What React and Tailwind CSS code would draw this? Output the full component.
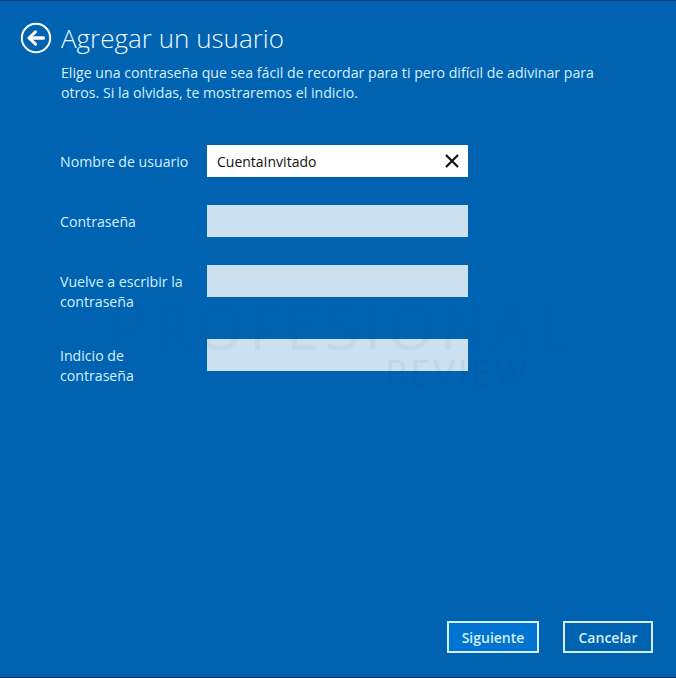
import React from 'react';

function Field({ label, top, children, white }) {
    return (
        <div className={`flex h-8 items-start ${top || ''}`}>
            <div className="w-[147px] shrink-0 pt-[7px] text-[14.15px] leading-[20px] text-[#d4f0ff]">{label}</div>
            <div className={`flex h-8 w-[261px] items-center justify-between ${white ? 'bg-white' : 'bg-[#cce0f0]'}`}>
                {children}
            </div>
        </div>
    );
}

export default function App() {
    return (
        <div className="relative flex h-[678px] w-[676px] flex-col overflow-hidden border-t border-b border-t-[#0a3a70] border-b-[#0a2a50] bg-[#0063b1] font-['Open_Sans','Noto_Sans',sans-serif] text-white">
            {/* Header */}
            <div className="flex items-center pl-[20px] pt-[21px]">
                <svg width="32" height="32" viewBox="0 0 32 32" fill="none">
                    <circle cx="16" cy="16" r="14.2" stroke="white" strokeWidth="2" />
                    <path d="M9 16 L15.5 9.8 M9 16 L15.5 22.2" stroke="white" strokeWidth="3" strokeLinecap="round" />
                    <path d="M10 16 H23.5" stroke="white" strokeWidth="3.4" strokeLinecap="round" />
                </svg>
                <h1 className="ml-[9px] text-[26px] font-light leading-[32px] text-[#eef8ff]">Agregar un usuario</h1>
            </div>
            <p className="ml-[61px] mt-[9px] w-[570px] text-[14.15px] leading-[20px] text-[#d4f0ff]">
                Elige una contraseña que sea fácil de recordar para ti pero difícil de adivinar para otros. Si la olvidas, te mostraremos el indicio.
            </p>

            {/* Form */}
            <div className="ml-[60px] mt-[42px] flex flex-col">
                <Field label="Nombre de usuario" white>
                    <span className="pl-[10px] text-[14px] text-[#111]">CuentaInvitado</span>
                    <svg className="mr-[9px]" width="14" height="14" viewBox="0 0 14 14" stroke="#111" strokeWidth="2.2">
                        <path d="M1 1 L13 13 M13 1 L1 13" />
                    </svg>
                </Field>
                <Field label="Contraseña" top="mt-7" />
                <Field label={<>Vuelve a escribir la<br />contraseña</>} top="mt-7" />
                <Field label={<>Indicio de<br />contraseña</>} top="mt-[42px]" />
            </div>

            {/* Watermark */}
            <div className="pointer-events-none absolute left-[110px] top-[290px] text-[62px] leading-[70px] tracking-[5px] text-[#003a70] opacity-[0.04]">PROFESIONAL</div>
            <div className="pointer-events-none absolute left-[385px] top-[352px] text-[36px] leading-[40px] tracking-[3px] text-[#003a70] opacity-[0.05]">REVIEW</div>

            {/* Buttons */}
            <div className="mt-auto mb-[24px] mr-[23px] flex justify-end gap-[24px]">
                <button className="h-8 w-[92px] border-2 border-[#d4f0ff] bg-[#0074d0] text-[14px] font-semibold text-[#d4f0ff]">Siguiente</button>
                <button className="h-8 w-[90px] border-2 border-[#d4f0ff] text-[14px] font-semibold text-[#d4f0ff]">Cancelar</button>
            </div>
        </div>
    );
}
